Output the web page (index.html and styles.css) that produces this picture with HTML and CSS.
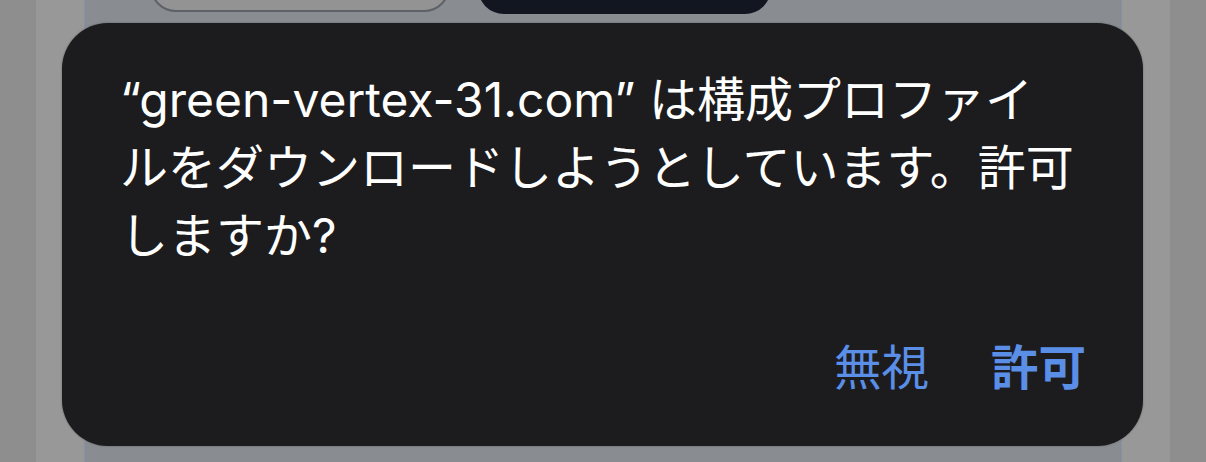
FILE: index.html
```html
<!DOCTYPE html>
<html lang="ja">
<head>
<meta charset="utf-8">
<link rel="stylesheet" href="styles.css">
</head>
<body>
<div class="backdrop">
  <div class="strip outer"></div>
  <div class="strip inner"></div>
  <div class="panel">
    <div class="btn-row">
      <div class="bg-btn light"></div>
      <div class="bg-btn dark"></div>
    </div>
  </div>
  <div class="strip inner"></div>
  <div class="strip outer"></div>
</div>
<div class="alert">
  <p class="message">“green-vertex-31.com” は構成プロファイ<br>ルをダウンロードしようとしています。許可<br>しますか?</p>
  <div class="actions">
    <span class="action">無視</span>
    <span class="action primary">許可</span>
  </div>
</div>
</body>
</html>
```
FILE: styles.css
```css
html, body {
  margin: 0;
  padding: 0;
  width: 1206px;
  height: 462px;
  overflow: hidden;
  background: #8e8e8e;
  font-family: "Inter", "Noto Sans CJK JP", sans-serif;
}
.backdrop {
  display: flex;
  height: 462px;
}
.strip.outer { width: 36px; background: #8e8e8e; }
.strip.inner { width: 48px; background: #989898; }
.panel {
  flex: 1;
  background: #898c91;
  border-left: 1px solid #8591a8;
  border-right: 1px solid #8591a8;
  padding-left: 65px;
}
.btn-row {
  display: flex;
  gap: 28px;
  margin-top: -48px;
}
.bg-btn {
  height: 60px;
  border-radius: 26px;
  box-sizing: border-box;
}
.bg-btn.light {
  width: 300px;
  background: #939393;
  border: 2px solid #5e6267;
}
.bg-btn.dark {
  width: 293px;
  height: 62px;
  background: #111620;
}
.alert {
  position: absolute;
  left: 62px;
  top: 23px;
  width: 1081px;
  height: 423px;
  box-sizing: border-box;
  background: #1c1c1e;
  border-radius: 46px;
  box-shadow: 0 0 2px rgba(0,0,0,0.35);
  padding: 43px 57px 0 58px;
  display: flex;
  flex-direction: column;
}
.message {
  margin: 0;
  color: #ffffff;
  font-size: 48px;
  line-height: 68px;
  white-space: nowrap;
  letter-spacing: 0;
}
.actions {
  margin-top: auto;
  margin-bottom: 54px;
  display: flex;
  justify-content: flex-end;
  gap: 62px;
}
.action {
  color: #5b8ee6;
  font-size: 47.5px;
  line-height: 48px;
}
.action.primary {
  font-weight: 700;
}
```
